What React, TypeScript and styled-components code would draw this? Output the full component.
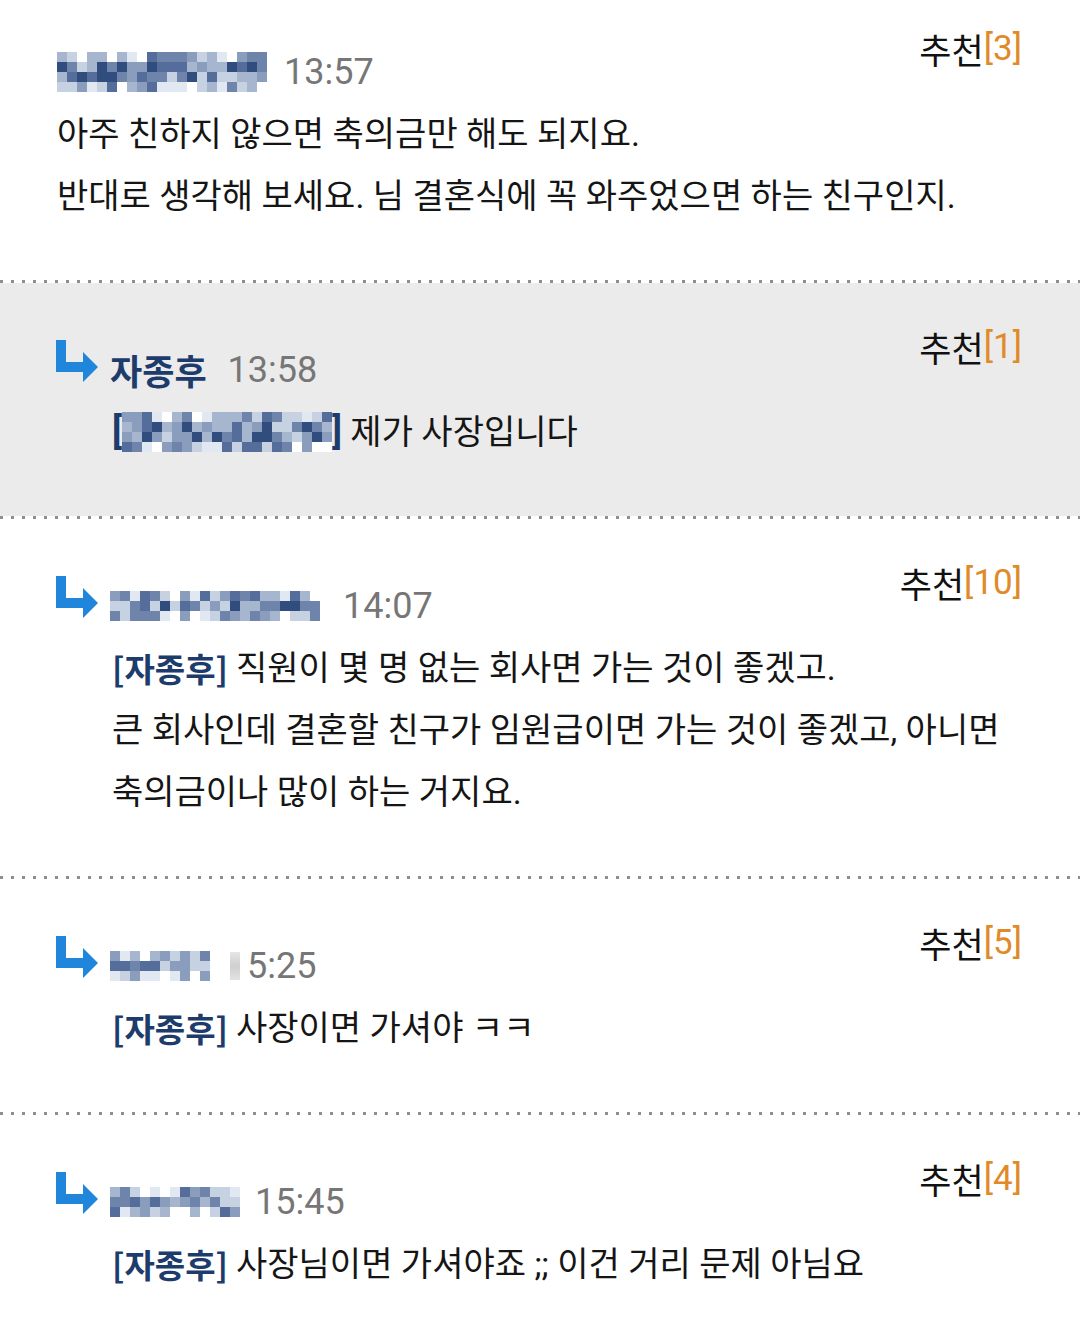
import React from "react";
import styled, { createGlobalStyle } from "styled-components";

const Global = createGlobalStyle`
  html, body { margin: 0; padding: 0; background: #ffffff; }
  body { font-family: Roboto, "Noto Sans CJK KR", sans-serif; overflow: hidden; }
  * { box-sizing: border-box; }
`;

const Page = styled.div`
  width: 1080px;
  display: flex;
  flex-direction: column;
  margin-top: -15px;
`;

const Section = styled.section<{ $shaded?: boolean }>`
  background: ${(p) => (p.$shaded ? "#ebebeb" : "#ffffff")};
  padding: 43px 58px 53px 57px;
  display: flex;
  flex-direction: column;
`;

const Divider = styled.div`
  height: 3px;
  background-color: #ffffff;
  background-image: linear-gradient(to right, #8e8e8e 3px, transparent 3px);
  background-size: 11px 3px;
  background-repeat: repeat-x;
`;

const Header = styled.div`
  display: flex;
  justify-content: space-between;
  align-items: flex-start;
  height: 66px;
`;

const Meta = styled.div`
  margin-top: 22px;
  height: 44px;
  display: flex;
  align-items: center;
`;

const ArrowBox = styled.span`
  width: 55px;
  display: inline-flex;
  align-items: center;
  margin-left: -2px;
  margin-top: -16px;
`;

const Name = styled.span`
  font-family: "Noto Sans CJK KR", sans-serif;
  font-weight: 700;
  font-size: 35px;
  color: #1d3c6c;
  line-height: 44px;
`;

const Time = styled.span<{ $gap?: number }>`
  font-family: Roboto, sans-serif;
  font-size: 36px;
  color: #767676;
  margin-left: ${(p) => p.$gap ?? 21}px;
  line-height: 44px;
`;

const Recommend = styled.div`
  font-family: "Noto Sans CJK KR", sans-serif;
  font-size: 35px;
  line-height: 42px;
  color: #111111;
  display: flex;
  align-items: center;
`;

const Count = styled.span`
  font-family: Roboto, sans-serif;
  color: #e08a2a;
  font-size: 35px;
`;

const Body = styled.div<{ $indent?: boolean }>`
  margin-top: 9px;
  padding-left: ${(p) => (p.$indent ? "55px" : "0")};
  display: flex;
  flex-direction: column;
`;

const Line = styled.p`
  margin: 0;
  font-family: Roboto, "Noto Sans CJK KR", sans-serif;
  font-size: 34px;
  line-height: 62px;
  color: #151515;
  white-space: nowrap;
  display: flex;
  align-items: center;
`;

const Tag = styled.span`
  font-family: "Noto Sans CJK KR", sans-serif;
  font-weight: 700;
  font-size: 33px;
  color: #1d3c6c;
  margin-right: 8px;
`;

const MosaicWrap = styled.span`
  display: inline-flex;
  align-items: center;
`;

const Bracket = styled.span`
  font-family: Roboto, sans-serif;
  font-weight: 700;
  font-size: 36px;
  color: #1d3c6c;
`;

const Smudge = styled.span`
  display: inline-block;
  width: 10px;
  height: 28px;
  margin-left: 20px;
  background: linear-gradient(to bottom, #e6e6e6, #cfcfcf 50%, #e2e2e2);
`;

const palette = ["#ffffff", "#e2e8f1", "#c6d1e2", "#a7b6cf", "#8a9dbd", "#6e84ab", "#546d9a", "#304d7e"];

function hash(a: number, b: number, s: number) {
  let h = (a * 374761393 + b * 668265263 + s * 1442695041) | 0;
  h = Math.imul(h ^ (h >>> 13), 1274126177);
  h = h ^ (h >>> 16);
  return ((h >>> 0) % 1000) / 1000;
}

const Mosaic: React.FC<{ cols: number; rows: number; cell?: number; seed: number }> = ({
  cols,
  rows,
  cell = 10,
  seed,
}) => {
  const rects: React.ReactElement[] = [];
  for (let r = 0; r < rows; r++) {
    for (let c = 0; c < cols; c++) {
      const v = hash(c, r, seed);
      const edgeRow = r === 0 || r === rows - 1;
      let idx: number;
      if (edgeRow) {
        idx = v < 0.35 ? (v < 0.2 ? 0 : 1) : 2 + Math.floor(((v - 0.35) / 0.65) * 5);
      } else {
        idx = 2 + Math.floor(v * 6);
      }
      rects.push(
        <rect key={`${r}-${c}`} x={c * cell} y={r * cell} width={cell} height={cell} fill={palette[idx]} />
      );
    }
  }
  return (
    <svg width={cols * cell} height={rows * cell} viewBox={`0 0 ${cols * cell} ${rows * cell}`}>
      {rects}
    </svg>
  );
};

const ReplyArrow = () => (
  <svg width="44" height="44" viewBox="0 0 44 44">
    <path d="M1 0 H11 V22 H28 V12 L43 27 L28 42 V32 H1 Z" fill="#1f86dc" />
  </svg>
);

type Props = {
  shaded?: boolean;
  reply?: boolean;
  name: React.ReactNode;
  time: string;
  timeGap?: number;
  count: number;
  lines: React.ReactNode[];
};

const Comment: React.FC<Props> = ({ shaded, reply, name, time, timeGap, count, lines }) => (
  <Section $shaded={shaded}>
    <Header>
      <Meta>
        {reply && (
          <ArrowBox>
            <ReplyArrow />
          </ArrowBox>
        )}
        {name}
        <Time $gap={timeGap}>{time}</Time>
      </Meta>
      <Recommend>
        추천<Count>[{count}]</Count>
      </Recommend>
    </Header>
    <Body $indent={reply}>
      {lines.map((l, i) => (
        <Line key={i}>{l}</Line>
      ))}
    </Body>
  </Section>
);

export default function App() {
  return (
    <Page>
      <Global />
      <Comment
        name={
          <MosaicWrap>
            <Mosaic cols={21} rows={4} seed={3} />
          </MosaicWrap>
        }
        time="13:57"
        timeGap={17}
        count={3}
        lines={["아주 친하지 않으면 축의금만 해도 되지요.", "반대로 생각해 보세요. 님 결혼식에 꼭 와주었으면 하는 친구인지."]}
      />
      <Divider />
      <Comment
        shaded
        reply
        name={<Name>자종후</Name>}
        time="13:58"
        count={1}
        lines={[
          <>
            <MosaicWrap>
              <Bracket>[</Bracket>
              <Mosaic cols={21} rows={4} seed={11} />
              <Bracket>]</Bracket>
            </MosaicWrap>
            &nbsp;제가 사장입니다
          </>,
        ]}
      />
      <Divider />
      <Comment
        reply
        name={
          <MosaicWrap>
            <Mosaic cols={21} rows={3} seed={7} />
          </MosaicWrap>
        }
        time="14:07"
        timeGap={23}
        count={10}
        lines={[
          <>
            <Tag>[자종후]</Tag>직원이 몇 명 없는 회사면 가는 것이 좋겠고.
          </>,
          "큰 회사인데 결혼할 친구가 임원급이면 가는 것이 좋겠고, 아니면",
          "축의금이나 많이 하는 거지요.",
        ]}
      />
      <Divider />
      <Comment
        reply
        name={
          <MosaicWrap>
            <Mosaic cols={10} rows={3} seed={19} />
            <Smudge />
          </MosaicWrap>
        }
        time="5:25"
        timeGap={7}
        count={5}
        lines={[
          <>
            <Tag>[자종후]</Tag>사장이면 가셔야 ㅋㅋ
          </>,
        ]}
      />
      <Divider />
      <Comment
        reply
        name={
          <MosaicWrap>
            <Mosaic cols={13} rows={3} seed={23} />
          </MosaicWrap>
        }
        time="15:45"
        timeGap={15}
        count={4}
        lines={[
          <>
            <Tag>[자종후]</Tag>사장님이면 가셔야죠 ;; 이건 거리 문제 아님요
          </>,
        ]}
      />
    </Page>
  );
}
